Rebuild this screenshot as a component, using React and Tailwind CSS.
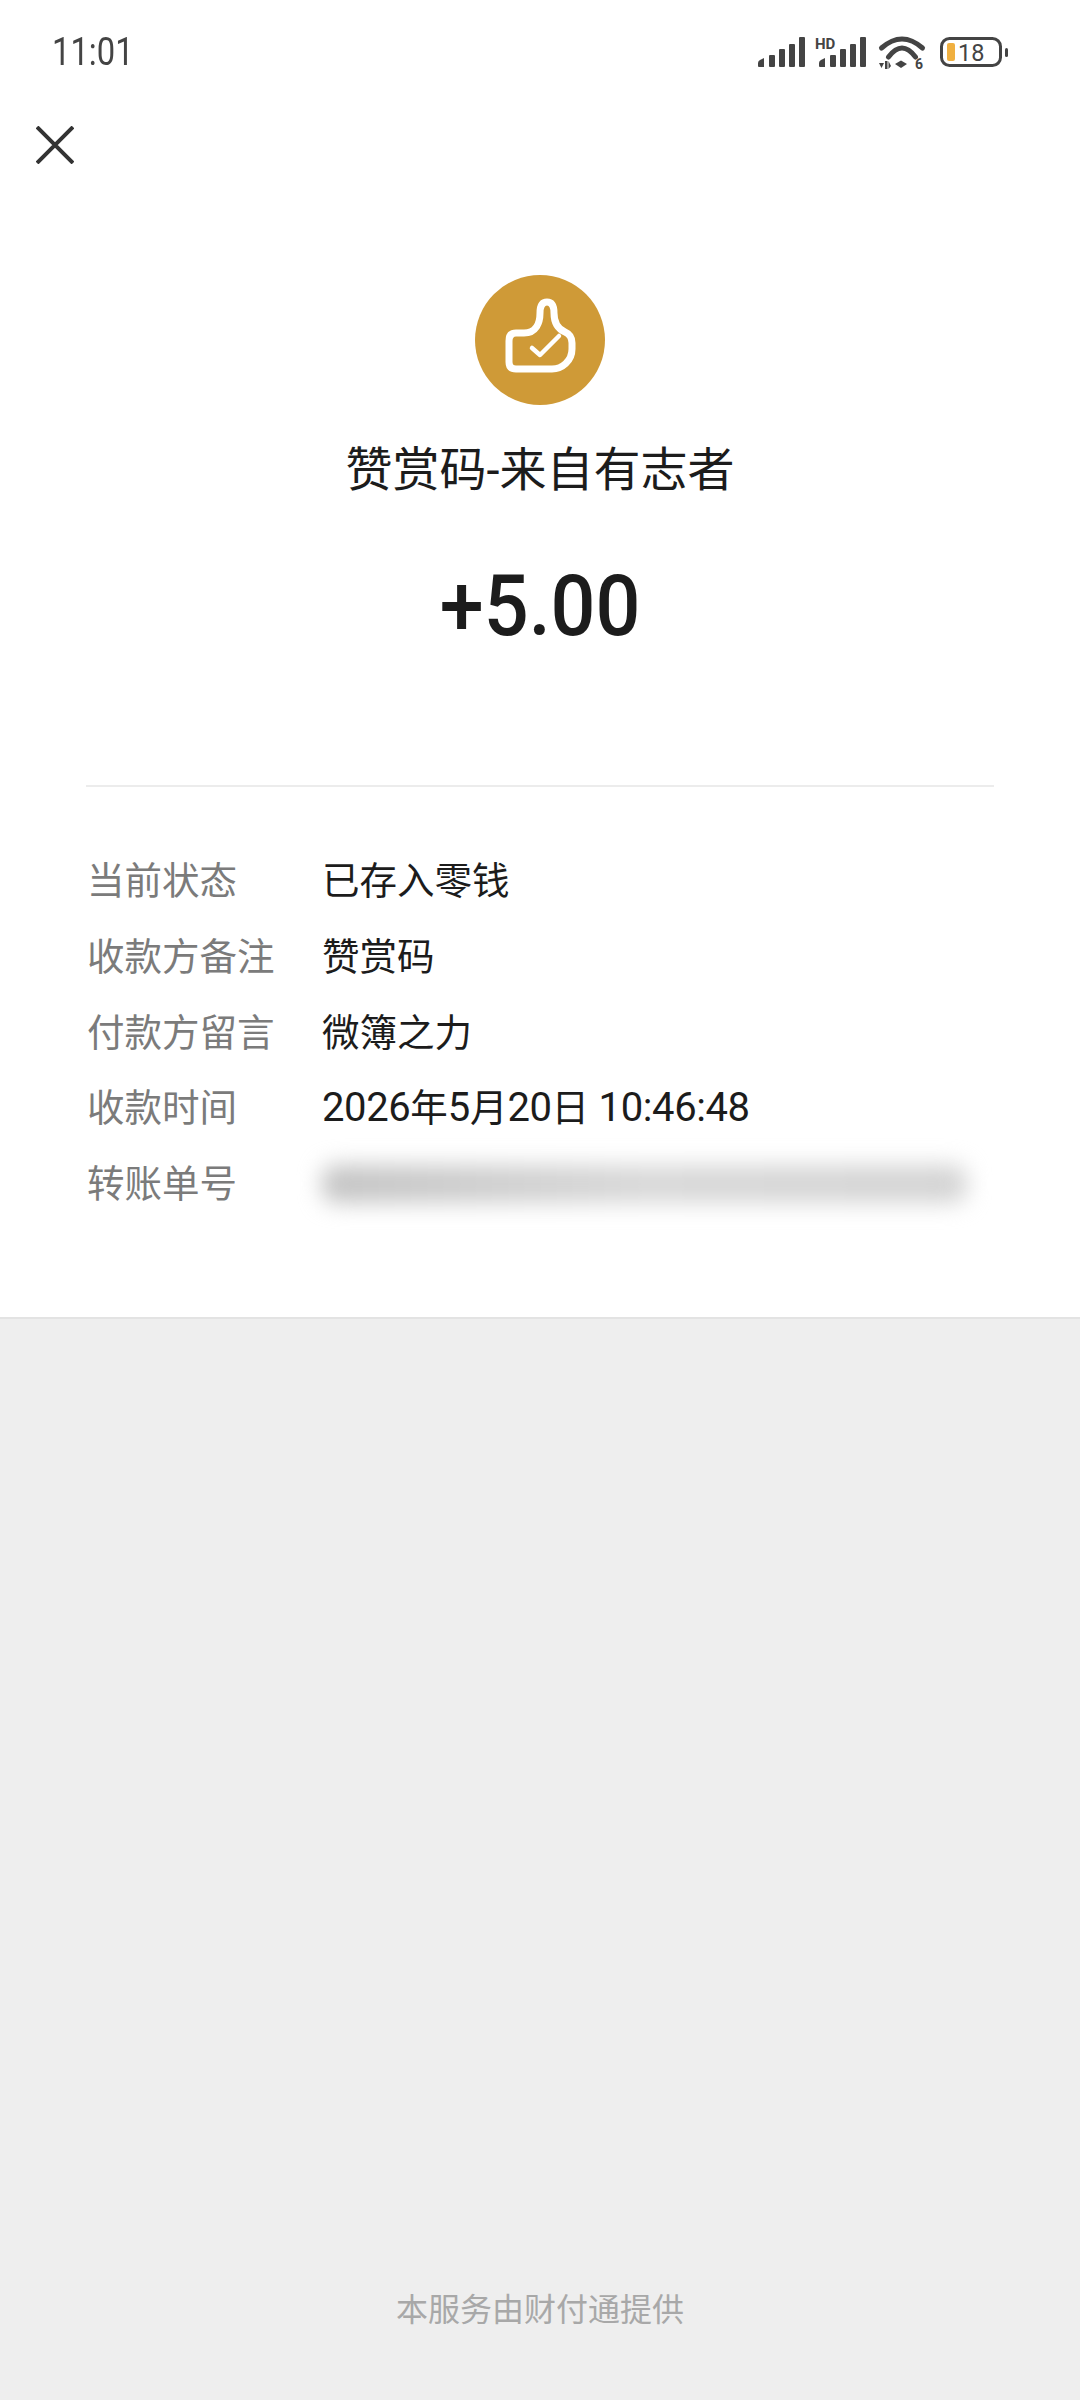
import React from "react";

const rows = [
  { label: "当前状态", value: "已存入零钱" },
  { label: "收款方备注", value: "赞赏码" },
  { label: "付款方留言", value: "微簿之力" },
  {
    label: "收款时间",
    value: (
      <>
        <span className="text-[40px] tracking-[-0.4px]">2026</span>年
        <span className="text-[40px] tracking-[-0.4px]">5</span>月
        <span className="text-[40px] tracking-[-0.4px]">20</span>日
        <span className="text-[40px] tracking-[-0.4px]"> 10:46:48</span>
      </>
    ),
  },
];

const font = "font-['Roboto','Noto_Sans_CJK_SC',sans-serif]";

function SignalBars({ hd }) {
  return (
    <svg width="50" height="30" viewBox="0 0 50 30" fill="#444" className="overflow-visible">
      {hd && (
        <text x="-1" y="12" fontSize="15" fontWeight="700" fontFamily="Roboto, sans-serif">HD</text>
      )}
      <g transform={hd ? "translate(3 0)" : undefined}>
        <path d="M0 26q0-2 2-3l4-2v9H1q-1 0-1-1z" />
        <rect x="11" y="18" width="6" height="12" rx="1" />
        <rect x="21" y="12" width="6" height="18" rx="1" />
        <rect x="31" y="7" width="6" height="23" rx="1" />
        <rect x="41" y="0" width="6" height="30" rx="1" />
      </g>
    </svg>
  );
}

function StatusIcons() {
  return (
    <div className="flex items-center mr-[72px]">
      <div className="w-[58px]"><SignalBars /></div>
      <div className="w-[63px]"><SignalBars hd /></div>
      <svg width="61" height="34" viewBox="0 0 61 34" className="overflow-visible">
        <path d="M2.500 13Q23-5 43.500 13" fill="none" stroke="#444" strokeWidth="5" strokeLinecap="round" />
        <path d="M9.500 22Q23 4 36.500 22" fill="none" stroke="#444" strokeWidth="5" strokeLinecap="round" />
        <path d="M16 29L22 25.500L28 29L22 33z" fill="#444" />
        <path d="M0 28h5l-2.500 5zM6 34v-8h2.500v8zM9.500 34v-8l2.500 5z" fill="#444" />
        <text x="36" y="34" fontSize="14" fontWeight="700" fill="#444" fontFamily="Roboto, sans-serif">6</text>
      </svg>
      <svg width="68" height="30" viewBox="0 0 68 30">
        <rect x="1.500" y="1.500" width="59" height="27" rx="8" fill="none" stroke="#444" strokeWidth="3" />
        <rect x="7" y="6" width="8" height="18" rx="2" fill="#f0b040" />
        <text x="18" y="23.500" fontSize="23.500" fill="#444" fontFamily="Roboto, sans-serif">18</text>
        <rect x="65" y="11" width="3" height="9" rx="1.500" fill="#444" />
      </svg>
    </div>
  );
}

function ThumbBadge() {
  return (
    <div className="w-[130px] h-[130px] rounded-full bg-[#cf9a37] flex items-center justify-center">
      <svg width="80" height="88" viewBox="500 295 80 88" fill="none" stroke="#fff" strokeLinejoin="round" strokeLinecap="round">
        <path d="M516 368Q509 368 509 361V340Q509 332 516 332H524C536 332 540 322 540 312Q540 301 547 301Q554 301 554 312C554 322 558 328 565 331Q572 334 572 342V348C572 360 562 368 552 368Z" strokeWidth="7" />
        <path d="M532 347L540 354L559 335" strokeWidth="4.500" />
      </svg>
    </div>
  );
}

export default function App() {
  return (
    <div className={`${font} w-[1080px] h-[2400px] flex flex-col bg-[#eeeeee]`}>
      <div className="bg-white h-[1319px] border-b-2 border-[#e3e3e3]">
        <div className="flex items-center justify-between h-[104px] pl-[52px]">
          <span className="inline-block origin-left scale-x-[.84] text-[39px] text-[#444444] leading-none">11:01</span>
          <StatusIcons />
        </div>

        <div className="pl-[36px] pt-[22px] h-[171px]">
          <svg width="38" height="38" viewBox="0 0 38 38" stroke="#333" strokeWidth="4" fill="none">
            <path d="M1 1l36 36M37 1L1 37" />
          </svg>
        </div>

        <div className="flex flex-col items-center">
          <ThumbBadge />
          <div className="mt-[37px] text-[47px] leading-[56px] text-[#1c1c1c]">赞赏码-来自有志者</div>
          <div className="mt-[63px] scale-x-[.92] text-[86px] leading-[90px] font-medium text-[#1c1c1c]">+5.00</div>
        </div>

        <div className="mx-[86px] mt-[134px] border-t-2 border-[#ececec]" />

        <div className="ml-[87px] mt-[66px] flex flex-col gap-[19.75px] text-[37.500px] leading-[56px]">
          {rows.map((r) => (
            <div key={r.label} className="flex">
              <div className="w-[235px] text-[#7b7b7b]">{r.label}</div>
              <div className="text-[#1c1c1c]">{r.value}</div>
            </div>
          ))}
          <div className="flex items-center">
            <div className="w-[235px] text-[#7b7b7b]">转账单号</div>
            <div className="w-[645px] h-[38px] rounded-[14px] blur-[11px] bg-gradient-to-r from-[#c4c4c4] via-[#d8d8d8] to-[#d4d4d4]" />
          </div>
        </div>
      </div>

      <div className="flex-1 flex flex-col justify-end items-center pb-[70px]">
        <div className="text-[32px] leading-[40px] text-[#a8a8a8]">本服务由财付通提供</div>
      </div>
    </div>
  );
}
